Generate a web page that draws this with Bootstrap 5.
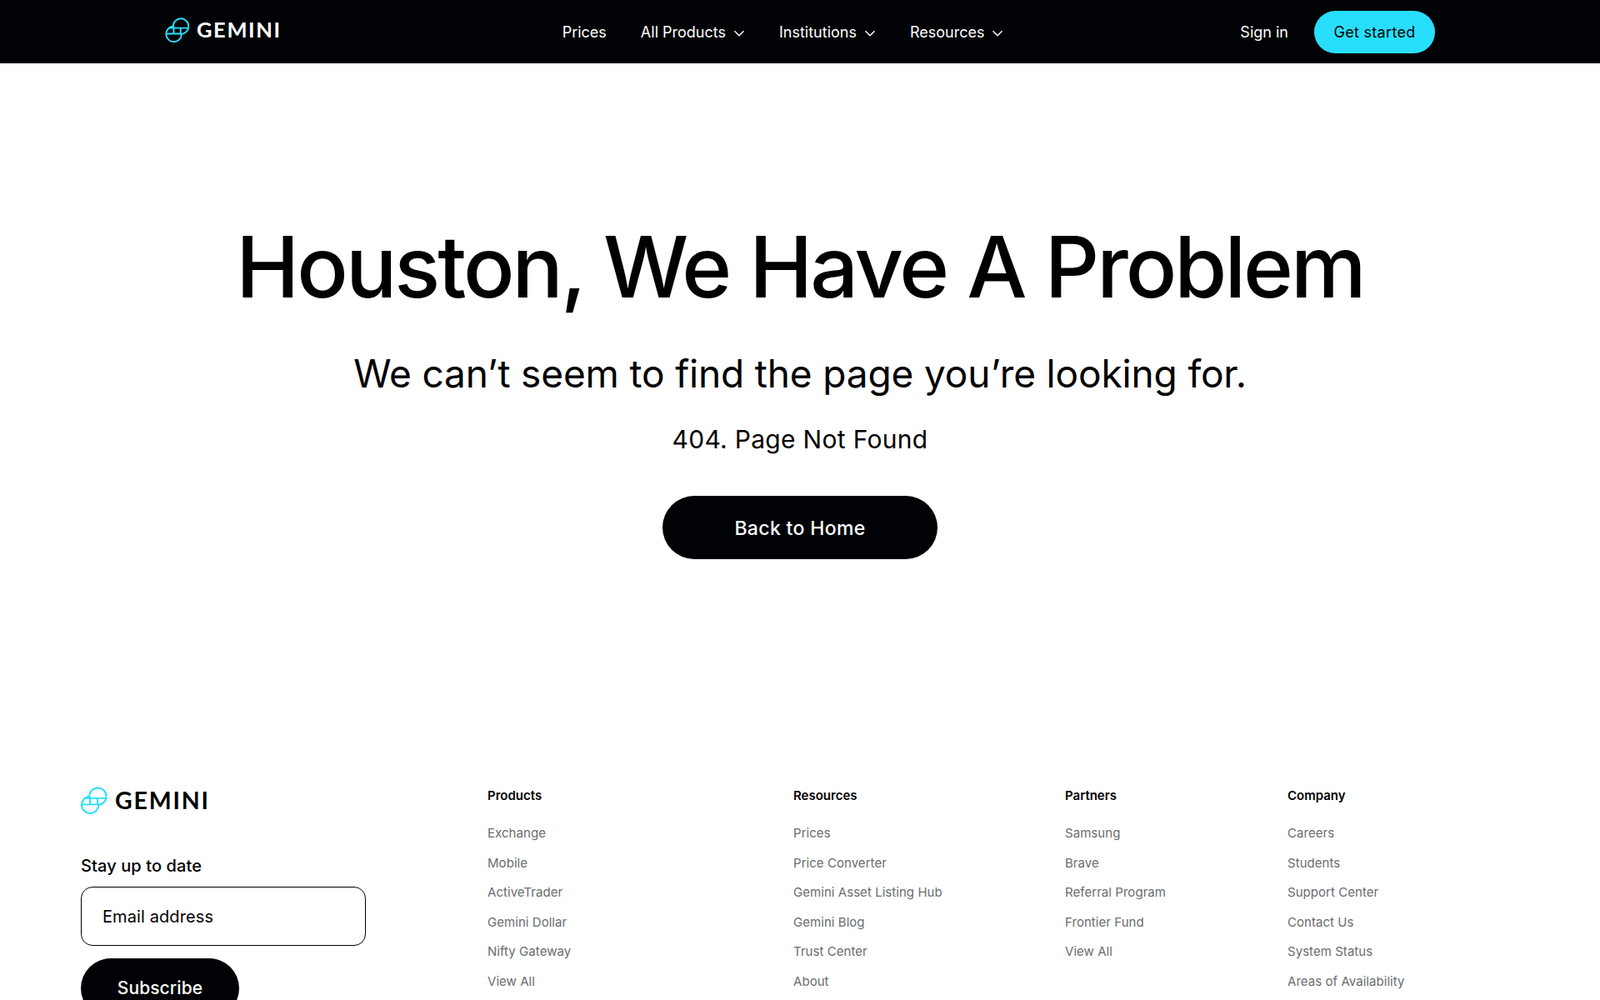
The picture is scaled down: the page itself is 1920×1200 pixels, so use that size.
<!DOCTYPE html>
<html lang="en">
<head>
  <meta charset="UTF-8" />
  <meta name="viewport" content="width=device-width, initial-scale=1.0"/>
  <title>Gemini - Page Not Found</title>
  <link href="https://cdn.jsdelivr.net/npm/bootstrap@5.3.3/dist/css/bootstrap.min.css" rel="stylesheet">
  <style>
    html, body {
      height: 1200px;
      overflow: hidden;
    }

    body {
      font-family: Inter, "Liberation Sans", sans-serif;
      color: #000;
    }

    .top-bar {
      height: 76px;
      background: #000205;
      padding: 0 198px;
    }

    .brand-word {
      font-family: Lato, "Liberation Sans", sans-serif;
      font-weight: 700;
      font-size: 25.5px;
      letter-spacing: 1.6px;
      line-height: 1;
    }

    .top-logo {
      gap: 8px;
      margin-bottom: 5px;
    }

    .top-bar .brand-word {
      color: #fff;
    }

    .top-links {
      margin-left: 337px;
      gap: 41px;
    }

    .top-link {
      color: #fff;
      font-size: 18px;
      font-weight: 400;
      text-decoration: none;
    }

    .top-link svg {
      margin-left: 9px;
    }

    .btn-start {
      background: #27dffd;
      color: #000;
      border-radius: 26px;
      height: 51px;
      width: 145px;
      padding: 0;
      font-size: 18px;
      letter-spacing: 0.3px;
      margin-left: 31px;
      border: 0;
    }

    .hero {
      height: 870px;
      padding-top: 183px;
    }

    .hero h1 {
      font-size: 102px;
      font-weight: 500;
      line-height: 1.2;
      margin-bottom: 40px;
      letter-spacing: -3px;
    }

    .hero h2 {
      font-size: 46px;
      font-weight: 400;
      line-height: 1.2;
      margin-bottom: 32px;
      letter-spacing: -0.15px;
    }

    .hero p {
      font-size: 30px;
      line-height: 1.2;
      margin-bottom: 50px;
      letter-spacing: 0.3px;
    }

    .btn-home {
      background: #000205;
      color: #fff;
      border-radius: 38px;
      width: 330px;
      height: 76px;
      padding-top: 9px;
      font-size: 23px;
      font-weight: 500;
      letter-spacing: 0.35px;
      border: 0;
    }

    .site-foot {
      padding: 0 0 0 97px;
    }

    .foot-left {
      width: 488px;
    }

    .foot-logo {
      gap: 9px;
      margin-top: -2px;
    }

    .foot-logo .brand-word {
      color: #000;
      font-size: 28.5px;
      letter-spacing: 1.8px;
    }

    .stay-label {
      font-size: 20px;
      font-weight: 500;
      letter-spacing: 0.1px;
      margin: 47px 0 10px;
    }

    .email-box {
      width: 342px;
      height: 71px;
      border: 1.5px solid #000;
      border-radius: 14px;
      font-size: 20px;
      letter-spacing: 0.1px;
      padding: 0 25px;
      color: #000;
    }

    .email-box::placeholder {
      color: #000;
      opacity: 1;
    }

    .btn-sub {
      display: block;
      background: #000205;
      color: #fff;
      border-radius: 36px;
      width: 190px;
      height: 72px;
      font-size: 21px;
      font-weight: 500;
      letter-spacing: 0.1px;
      margin-top: 15px;
      border: 0;
    }

    .foot-col h6 {
      font-size: 15px;
      font-weight: 600;
      margin-bottom: 27px;
      line-height: 18px;
    }

    .foot-col a {
      display: block;
      color: #6a6d70;
      font-size: 15px;
      letter-spacing: 0.05px;
      line-height: 18px;
      margin-bottom: 17.5px;
      text-decoration: none;
    }

    .col-products { width: 367px; }
    .col-resources { width: 326px; }
    .col-partners { width: 267px; }
  </style>
</head>
<body>

  <nav class="top-bar d-flex align-items-center">
    <a class="top-logo d-flex align-items-center text-decoration-none" href="#">
      <svg width="30" height="30" viewBox="-1 -1 33 34" fill="none" stroke="#27dffd" stroke-width="2.2">
        <path d="M9.8 13.3A10.5 10.5 0 1 1 19.7 21.5"/>
        <path d="M21 21A10.5 10.5 0 1 1 10.3 11"/>
        <path d="M3.9 13.3H30.2M0 21H21M10.3 11V21M19.7 13.3V21.5"/>
      </svg>
      <span class="brand-word">GEMINI</span>
    </a>
    <div class="top-links d-flex align-items-center">
      <a class="top-link" href="#">Prices</a>
      <a class="top-link" href="#">All Products<svg width="14" height="8" viewBox="0 0 13 8" fill="none" stroke="#fff" stroke-width="1.5"><path d="M1 1.2l5.5 5.5L12 1.2"/></svg></a>
      <a class="top-link" href="#">Institutions<svg width="14" height="8" viewBox="0 0 13 8" fill="none" stroke="#fff" stroke-width="1.5"><path d="M1 1.2l5.5 5.5L12 1.2"/></svg></a>
      <a class="top-link" href="#">Resources<svg width="14" height="8" viewBox="0 0 13 8" fill="none" stroke="#fff" stroke-width="1.5"><path d="M1 1.2l5.5 5.5L12 1.2"/></svg></a>
    </div>
    <div class="ms-auto d-flex align-items-center">
      <a class="top-link" href="#">Sign in</a>
      <button class="btn btn-start">Get started</button>
    </div>
  </nav>

  <main class="hero text-center">
    <h1>Houston, We Have A Problem</h1>
    <h2>We can’t seem to find the page you’re looking for.</h2>
    <p>404. Page Not Found</p>
    <button class="btn btn-home">Back to Home</button>
  </main>

  <footer class="site-foot d-flex">
    <div class="foot-left">
      <a class="foot-logo d-flex align-items-center text-decoration-none" href="#">
        <svg width="32" height="33" viewBox="-1 -1 33 34" fill="none" stroke="#27dffd" stroke-width="2">
          <path d="M9.8 13.3A10.5 10.5 0 1 1 19.7 21.5"/>
          <path d="M21 21A10.5 10.5 0 1 1 10.3 11"/>
          <path d="M3.9 13.3H30.2M0 21H21M10.3 11V21M19.7 13.3V21.5"/>
        </svg>
        <span class="brand-word">GEMINI</span>
      </a>
      <div class="stay-label">Stay up to date</div>
      <input class="email-box d-block" type="text" placeholder="Email address">
      <button class="btn btn-sub">Subscribe</button>
    </div>
    <div class="foot-col col-products">
      <h6>Products</h6>
      <a href="#">Exchange</a>
      <a href="#">Mobile</a>
      <a href="#">ActiveTrader</a>
      <a href="#">Gemini Dollar</a>
      <a href="#">Nifty Gateway</a>
      <a href="#">View All</a>
    </div>
    <div class="foot-col col-resources">
      <h6>Resources</h6>
      <a href="#">Prices</a>
      <a href="#">Price Converter</a>
      <a href="#">Gemini Asset Listing Hub</a>
      <a href="#">Gemini Blog</a>
      <a href="#">Trust Center</a>
      <a href="#">About</a>
    </div>
    <div class="foot-col col-partners">
      <h6>Partners</h6>
      <a href="#">Samsung</a>
      <a href="#">Brave</a>
      <a href="#">Referral Program</a>
      <a href="#">Frontier Fund</a>
      <a href="#">View All</a>
    </div>
    <div class="foot-col">
      <h6>Company</h6>
      <a href="#">Careers</a>
      <a href="#">Students</a>
      <a href="#">Support Center</a>
      <a href="#">Contact Us</a>
      <a href="#">System Status</a>
      <a href="#">Areas of Availability</a>
    </div>
  </footer>

  <script src="https://cdn.jsdelivr.net/npm/bootstrap@5.3.3/dist/js/bootstrap.bundle.min.js"></script>
</body>
</html>
